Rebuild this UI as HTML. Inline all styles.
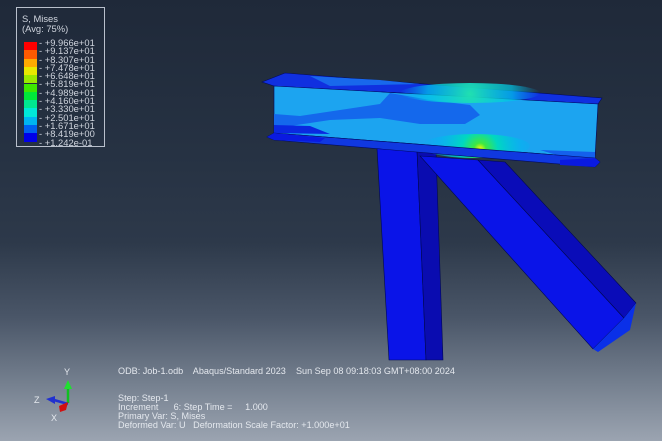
<!DOCTYPE html>
<html><head><style>
html,body{margin:0;padding:0}
body{width:662px;height:441px;overflow:hidden;position:relative;font-family:"Liberation Sans",sans-serif;
background:linear-gradient(to bottom,#1f2939 0%,#263243 35%,#2d394a 55%,#4a5668 72%,#75808f 87%,#9ba4b1 100%);}
.leg{position:absolute;left:16px;top:7px;width:89px;height:140px;border:1px solid #b9c0cc;box-sizing:border-box}
.t{position:absolute;color:#d0d5de;font-size:9.4px;line-height:8.3px;white-space:pre}
.sw{position:absolute;left:24px;width:13px;height:8.3px}
.info{position:absolute;color:#e4e8ee;font-size:9.1px;line-height:9px;white-space:pre}
</style></head><body>
<div class="leg"></div>
<div class="t" style="left:22px;top:14px;line-height:10px">S, Mises
(Avg: 75%)</div>
<div class="sw" style="top:42px;background:#ff0000"></div>
<div class="sw" style="top:50.3px;background:#ff5a00"></div>
<div class="sw" style="top:58.6px;background:#ffaa00"></div>
<div class="sw" style="top:66.9px;background:#e8e800"></div>
<div class="sw" style="top:75.2px;background:#9ae800"></div>
<div class="sw" style="top:83.5px;background:#3ee800"></div>
<div class="sw" style="top:91.8px;background:#00e83a"></div>
<div class="sw" style="top:100.1px;background:#00e890"></div>
<div class="sw" style="top:108.4px;background:#00e8d8"></div>
<div class="sw" style="top:116.7px;background:#00b4f0"></div>
<div class="sw" style="top:125px;background:#0060f0"></div>
<div class="sw" style="top:133.3px;background:#0000e8"></div>
<div class="t" style="left:39px;top:39px">- +9.966e+01
- +9.137e+01
- +8.307e+01
- +7.478e+01
- +6.648e+01
- +5.819e+01
- +4.989e+01
- +4.160e+01
- +3.330e+01
- +2.501e+01
- +1.671e+01
- +8.419e+00
- +1.242e-01</div>

<svg width="662" height="441" style="position:absolute;left:0;top:0">
<defs>
<radialGradient id="hs" cx="480" cy="149" r="60" gradientUnits="userSpaceOnUse">
<stop offset="0" stop-color="#ffff00"/><stop offset="0.1" stop-color="#40e840"/><stop offset="0.3" stop-color="#00d8c0"/><stop offset="0.7" stop-color="#00b8f0" stop-opacity="0.5"/><stop offset="1" stop-color="#00b0f0" stop-opacity="0"/>
</radialGradient>
<radialGradient id="hs2" cx="470" cy="94" r="70" gradientUnits="userSpaceOnUse">
<stop offset="0" stop-color="#20e0b0"/><stop offset="0.6" stop-color="#00c8e8" stop-opacity="0.7"/><stop offset="1" stop-color="#00b0f0" stop-opacity="0"/>
</radialGradient>
</defs>
<!-- column -->
<polygon points="377,148 417,150 426,360 389,360" fill="#0a14e8" stroke="#000850" stroke-width="0.6"/>
<polygon points="417,150 436,152 443,360 426,360" fill="#0a0cb0" stroke="#000850" stroke-width="0.6"/>
<!-- brace -->
<polygon points="420,156 478,160 624,318 593,349" fill="#0a14e8" stroke="#000850" stroke-width="0.6"/>
<polygon points="478,160 505,162 636,303 624,318" fill="#0a0cb8" stroke="#000850" stroke-width="0.6"/>
<polygon points="593,349 624,318 636,303 630,330 598,352" fill="#0a30e8"/>
<!-- top flange -->
<polygon points="262,82 285,73 602,98 598,104 274,86" fill="#1030e0" stroke="#000860" stroke-width="0.6"/>
<polygon points="310,76 380,80 420,84 330,86" fill="#1868ec"/>
<!-- web -->
<polygon points="274,86 598,104 595,158 274,133" fill="#1ca4f0" stroke="#000860" stroke-width="0.6"/>
<path d="M390,93 L430,100 L470,105 L480,115 L465,124 L420,124 L380,118 L330,120 L290,126 L274,126 L274,114 L300,116 L340,110 L380,104Z" fill="#1468ec"/>
<path d="M274,125 L310,126 L330,134 L274,133Z" fill="#0a28e0"/>
<path d="M540,150 L595,152 L595,158 L560,156Z" fill="#1460ec"/>
<ellipse cx="470" cy="93" rx="70" ry="10" fill="url(#hs2)"/>
<ellipse cx="475" cy="146" rx="55" ry="12" fill="url(#hs)"/>
<!-- bottom flange -->
<polygon points="267,137 274,133 595,158 600,162 595,167 274,140" fill="#1038e0" stroke="#000860" stroke-width="0.6"/>
<polygon points="267,137 274,133 325,138 320,142 274,140" fill="#0a1ae0"/>
<polygon points="560,160 595,158 600,162 595,167 560,165" fill="#0a1ae0"/>
<!-- triad -->
<line x1="68" y1="403" x2="68" y2="388" stroke="#10c020" stroke-width="2.5"/>
<polygon points="64,389 72,389 68,380" fill="#20e030"/>
<line x1="68" y1="404" x2="54" y2="400" stroke="#2030d0" stroke-width="2.5"/>
<polygon points="55,396 55,404 46,399" fill="#2030d0"/>
<polygon points="59,406 68,402 66,410 60,412" fill="#d01010"/>
</svg>
<div class="info" style="left:64px;top:368px">Y</div>
<div class="info" style="left:34px;top:396px">Z</div>
<div class="info" style="left:51px;top:414px">X</div>
<div class="info" style="left:118px;top:367px">ODB: Job-1.odb    Abaqus/Standard 2023    Sun Sep 08 09:18:03 GMT+08:00 2024</div>
<div class="info" style="left:118px;top:394px">Step: Step-1
Increment      6: Step Time =     1.000
Primary Var: S, Mises
Deformed Var: U   Deformation Scale Factor: +1.000e+01</div>
</body></html>
